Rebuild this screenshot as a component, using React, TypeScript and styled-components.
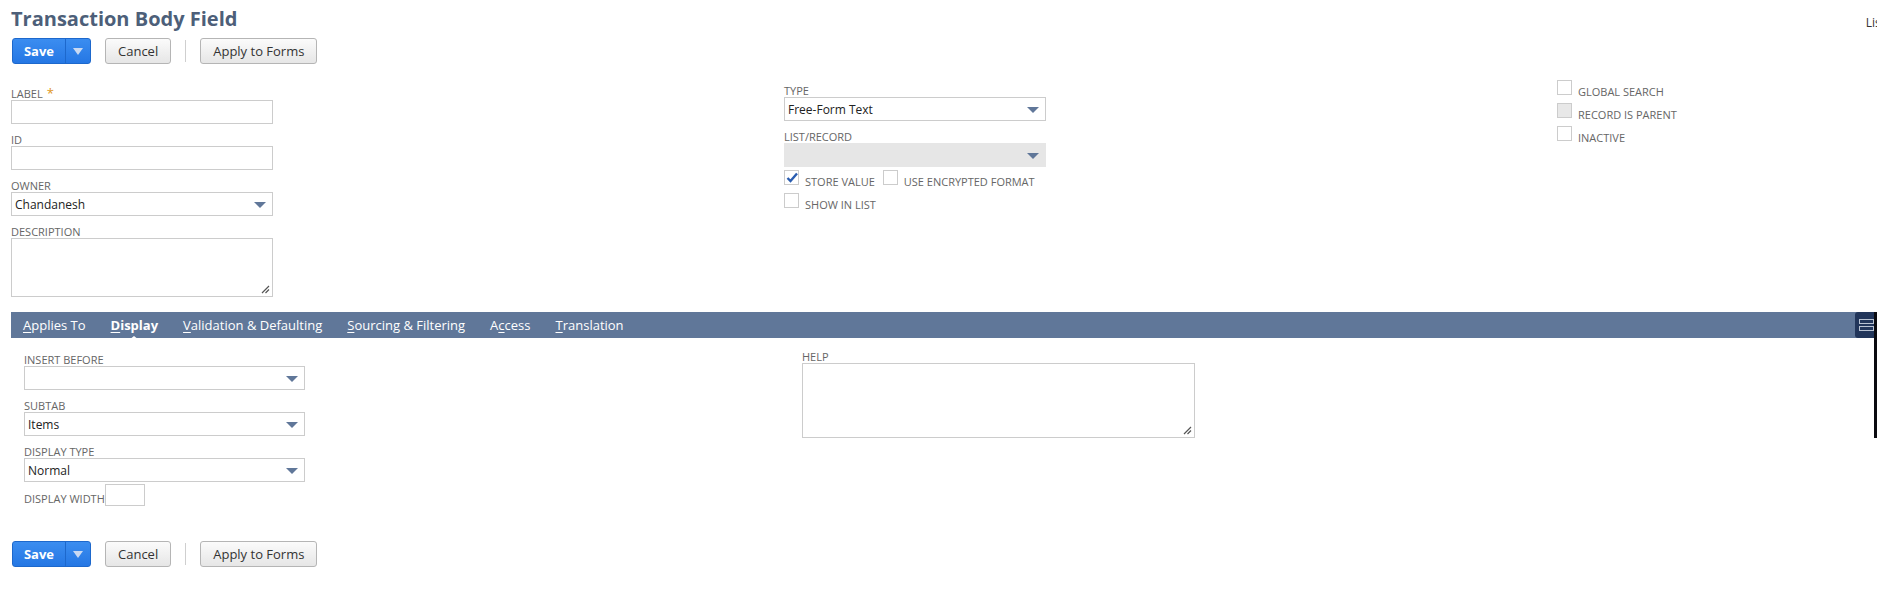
import React from 'react';
import styled, { createGlobalStyle } from 'styled-components';

const GlobalStyle = createGlobalStyle`
  html, body {
    margin: 0;
    padding: 0;
    background: #ffffff;
    overflow: hidden;
  }
  body {
    font-family: 'Open Sans', 'Noto Sans', Arial, sans-serif;
    color: #333;
  }
`;

const Page = styled.div`
  position: relative;
  width: 1877px;
  height: 615px;
  overflow: hidden;
`;

const Header = styled.div`
  display: flex;
  justify-content: space-between;
  align-items: flex-start;
  padding: 7px 0 0 11px;
`;

const Title = styled.h1`
  margin: 0;
  font-size: 20px;
  line-height: 24px;
  font-weight: 700;
  color: #4d5f79;
`;

const TopLink = styled.a`
  font-size: 12px;
  line-height: 16px;
  margin-top: 8px;
  margin-right: -8px;
  color: #333;
  text-decoration: none;
`;

const ButtonBar = styled.div<{ $top: number }>`
  display: flex;
  align-items: center;
  padding-left: 12px;
  margin-top: ${p => p.$top}px;
  height: 26px;
`;

const SplitButton = styled.div`
  display: flex;
  height: 26px;
  border: 1px solid #1d68cc;
  border-radius: 3px;
  box-sizing: border-box;
  overflow: hidden;
  background: linear-gradient(#3b8df0, #2577e4);
`;

const SaveLabel = styled.span`
  width: 52px;
  display: flex;
  align-items: center;
  justify-content: center;
  color: #fff;
  font-weight: 700;
  font-size: 13px;
  border-right: 1px solid #1d68cc;
`;

const SaveArrow = styled.span`
  width: 24px;
  display: flex;
  align-items: center;
  justify-content: center;
  &::after {
    content: '';
    border-left: 5px solid transparent;
    border-right: 5px solid transparent;
    border-top: 7px solid #c9d9f2;
  }
`;

const GreyButton = styled.button`
  height: 26px;
  box-sizing: border-box;
  padding: 0 12px;
  margin-left: 14px;
  border: 1px solid #b5b5b5;
  border-radius: 3px;
  background: linear-gradient(#fbfbfb, #e6e6e6);
  font-family: 'Open Sans', sans-serif;
  font-size: 13px;
  color: #333;
`;

const Divider = styled.span`
  width: 1px;
  height: 22px;
  background: #cfcfcf;
  margin-left: 14px;
`;

const MainGrid = styled.div`
  display: grid;
  grid-template-columns: 773px 773px 1fr;
  padding-left: 11px;
`;

const Column = styled.div<{ $top: number }>`
  padding-top: ${p => p.$top}px;
`;

const Field = styled.div<{ $width: number; $after?: number }>`
  width: ${p => p.$width}px;
  margin-bottom: ${p => p.$after ?? 9}px;
`;

const Label = styled.div`
  font-size: 11px;
  line-height: 13px;
  color: #666;
  text-transform: uppercase;
  white-space: nowrap;
`;

const Star = styled.span`
  color: #e0951b;
  font-size: 13px;
  margin-left: 4px;
`;

const TextBox = styled.div<{ $height?: number }>`
  position: relative;
  box-sizing: border-box;
  height: ${p => p.$height ?? 24}px;
  border: 1px solid #cccccc;
  background: #fff;
`;

const SelectBox = styled.div<{ $disabled?: boolean }>`
  display: flex;
  align-items: center;
  justify-content: space-between;
  box-sizing: border-box;
  height: 24px;
  padding: 0 6px 0 3px;
  border: 1px solid ${p => (p.$disabled ? '#e6e6e6' : '#cccccc')};
  background: ${p => (p.$disabled ? '#e6e6e6' : '#fff')};
  font-size: 12px;
  color: #222;
`;

const Caret = styled.span`
  border-left: 6px solid transparent;
  border-right: 6px solid transparent;
  border-top: 6px solid #607799;
  margin-top: 1px;
`;

const Grip = styled.svg`
  position: absolute;
  right: 2px;
  bottom: 2px;
`;

const CheckRow = styled.div`
  display: flex;
  align-items: flex-end;
  height: 16px;
  margin-bottom: 7px;
`;

const Box = styled.span<{ $shade?: boolean }>`
  position: relative;
  width: 15px;
  height: 15px;
  box-sizing: border-box;
  border: 1px solid #cccccc;
  background: ${p => (p.$shade ? '#e8e8e8' : '#fff')};
  margin-right: 6px;
  flex: none;
`;

const CheckText = styled.span<{ $gap?: number }>`
  font-size: 11px;
  line-height: 13px;
  color: #666;
  text-transform: uppercase;
  white-space: nowrap;
  margin-right: ${p => p.$gap ?? 0}px;
  margin-bottom: -3px;
`;

const Tick = styled.svg`
  position: absolute;
  left: 0;
  top: -1px;
`;

const TabBar = styled.div`
  position: relative;
  display: flex;
  align-items: center;
  gap: 25px;
  height: 26px;
  margin: 15px 0 0 11px;
  padding-left: 12px;
  background: #607799;
`;

const Tab = styled.span<{ $active?: boolean }>`
  position: relative;
  color: #fff;
  font-size: 13px;
  font-weight: ${p => (p.$active ? 700 : 400)};
  white-space: nowrap;
  u { text-underline-offset: 2px; }
  &::after {
    content: '';
    display: ${p => (p.$active ? 'block' : 'none')};
    position: absolute;
    left: 50%;
    bottom: -6px;
    margin-left: -5px;
    border-left: 5px solid transparent;
    border-right: 5px solid transparent;
    border-bottom: 4px solid #fff;
  }
`;

const TabIcon = styled.div`
  position: absolute;
  right: 0;
  top: 0;
  width: 22px;
  height: 26px;
  background: #22365b;
  border-radius: 3px 0 0 3px;
  display: flex;
  align-items: center;
  justify-content: center;
`;

const EdgeBar = styled.div`
  position: absolute;
  right: 0;
  top: 312px;
  width: 3px;
  height: 126px;
  background: #0b0b10;
`;

const DisplayGrid = styled.div`
  display: grid;
  grid-template-columns: 778px 1fr;
  padding-left: 24px;
`;

const WidthRow = styled.div`
  display: flex;
  align-items: flex-end;
  margin-top: -7px;
`;

const SmallBox = styled.div`
  width: 40px;
  height: 22px;
  box-sizing: border-box;
  border: 1px solid #cccccc;
`;

const ResizeGrip = () => (
  <Grip width="9" height="9" viewBox="0 0 9 9">
    <path d="M8 1 L1 8 M8 4.5 L4.5 8" stroke="#555" strokeWidth="1.2" />
  </Grip>
);

const Check = ({ checked, shade, text, gap }: { checked?: boolean; shade?: boolean; text: string; gap?: number }) => (
  <>
    <Box $shade={shade}>
      {checked && (
        <Tick width="15" height="15" viewBox="0 0 15 15">
          <path d="M2.5 8 L5.5 11 L12 3.5" fill="none" stroke="#2a5db0" strokeWidth="2.4" />
        </Tick>
      )}
    </Box>
    <CheckText $gap={gap}>{text}</CheckText>
  </>
);

const Buttons = ({ top }: { top: number }) => (
  <ButtonBar $top={top}>
    <SplitButton>
      <SaveLabel>Save</SaveLabel>
      <SaveArrow />
    </SplitButton>
    <GreyButton>Cancel</GreyButton>
    <Divider />
    <GreyButton>Apply to Forms</GreyButton>
  </ButtonBar>
);

const App = () => {
  return (
    <Page>
      <GlobalStyle />
      <Header>
        <Title>Transaction Body Field</Title>
        <TopLink>List</TopLink>
      </Header>
      <Buttons top={7} />

      <MainGrid>
        <Column $top={23}>
          <Field $width={262}>
            <Label>
              Label<Star>*</Star>
            </Label>
            <TextBox />
          </Field>
          <Field $width={262}>
            <Label>ID</Label>
            <TextBox />
          </Field>
          <Field $width={262}>
            <Label>Owner</Label>
            <SelectBox>
              Chandanesh
              <Caret />
            </SelectBox>
          </Field>
          <Field $width={262} $after={0}>
            <Label>Description</Label>
            <TextBox $height={59}>
              <ResizeGrip />
            </TextBox>
          </Field>
        </Column>

        <Column $top={20}>
          <Field $width={262}>
            <Label>Type</Label>
            <SelectBox>
              Free-Form Text
              <Caret />
            </SelectBox>
          </Field>
          <Field $width={262} $after={2}>
            <Label>List/Record</Label>
            <SelectBox $disabled>
              <span />
              <Caret />
            </SelectBox>
          </Field>
          <CheckRow>
            <Check checked text="Store Value" gap={8} />
            <Check text="Use Encrypted Format" />
          </CheckRow>
          <CheckRow>
            <Check text="Show in List" />
          </CheckRow>
        </Column>

        <Column $top={15}>
          <CheckRow>
            <Check text="Global Search" />
          </CheckRow>
          <CheckRow>
            <Check shade text="Record is Parent" />
          </CheckRow>
          <CheckRow>
            <Check text="Inactive" />
          </CheckRow>
        </Column>
      </MainGrid>

      <TabBar>
        <Tab>
          <u>A</u>pplies To
        </Tab>
        <Tab $active>
          <u>D</u>isplay
        </Tab>
        <Tab>
          <u>V</u>alidation &amp; Defaulting
        </Tab>
        <Tab>
          <u>S</u>ourcing &amp; Filtering
        </Tab>
        <Tab>
          A<u>c</u>cess
        </Tab>
        <Tab>
          <u>T</u>ranslation
        </Tab>
        <TabIcon>
          <svg width="16" height="14" viewBox="0 0 16 14">
            <rect x="1.5" y="1.5" width="14" height="4" fill="none" stroke="#b9c3d3" strokeWidth="1" />
            <rect x="1.5" y="8.5" width="14" height="4" fill="none" stroke="#b9c3d3" strokeWidth="1" />
          </svg>
        </TabIcon>
      </TabBar>
      <EdgeBar />

      <DisplayGrid>
        <Column $top={15}>
          <Field $width={281}>
            <Label>Insert Before</Label>
            <SelectBox>
              <span />
              <Caret />
            </SelectBox>
          </Field>
          <Field $width={281}>
            <Label>Subtab</Label>
            <SelectBox>
              Items
              <Caret />
            </SelectBox>
          </Field>
          <Field $width={281}>
            <Label>Display Type</Label>
            <SelectBox>
              Normal
              <Caret />
            </SelectBox>
          </Field>
          <WidthRow>
            <Label style={{ marginBottom: 1 }}>Display Width</Label>
            <SmallBox />
          </WidthRow>
        </Column>
        <Column $top={12}>
          <Field $width={393}>
            <Label>Help</Label>
            <TextBox $height={75}>
              <ResizeGrip />
            </TextBox>
          </Field>
        </Column>
      </DisplayGrid>

      <Buttons top={35} />
    </Page>
  );
};

export default App;
